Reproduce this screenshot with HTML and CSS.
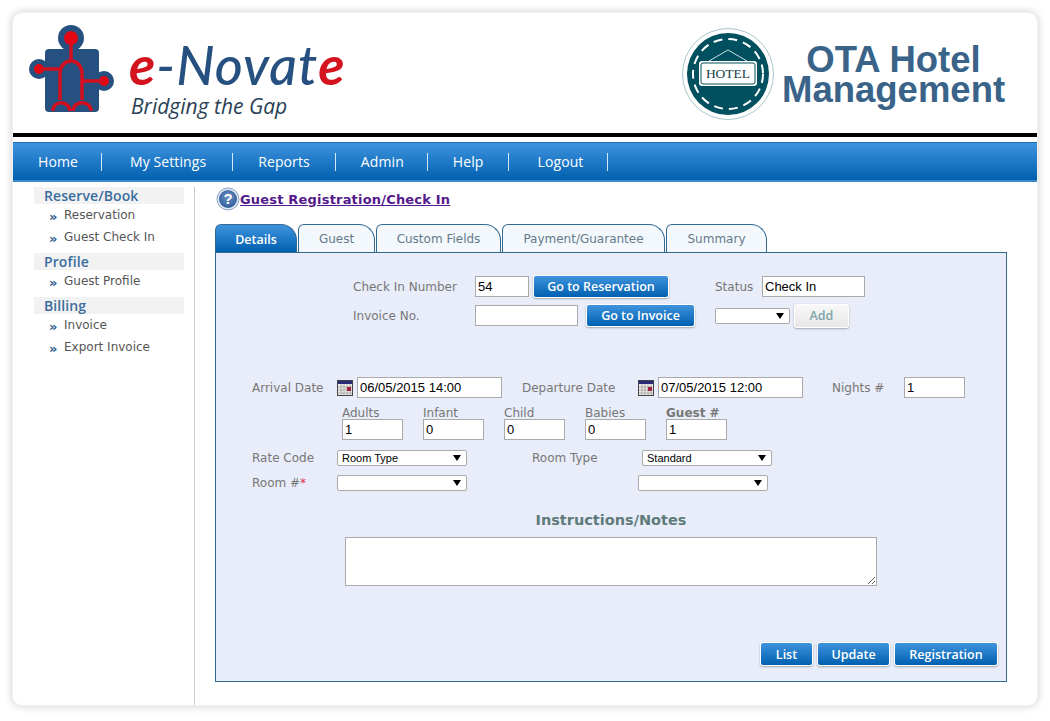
FILE: index.html
```html
<!DOCTYPE html>
<html>
<head>
    <meta charset="UTF-8">
    <title>OTA Hotel Management</title>
    <link rel="stylesheet" href="styles.css">
</head>
<body>
<div class="shell">
    <div class="top">
        <svg class="logo" viewBox="13 13 345 120" width="345" height="120">
            <g fill="#25507f">
                <rect x="45" y="49" width="54" height="63" rx="4"/>
                <circle cx="71" cy="38" r="13"/>
                <circle cx="39" cy="69" r="10"/>
                <circle cx="104" cy="81" r="10"/>
            </g>
            <g fill="#e30613">
                <circle cx="71" cy="38" r="7"/>
                <circle cx="39" cy="69" r="5"/>
                <circle cx="104" cy="81" r="5"/>
            </g>
            <g fill="none" stroke="#d3101f" stroke-width="3.5">
                <path d="M71 44V61"/>
                <path d="M39 69H60M104 81H82"/>
                <path d="M60 100V74C60 66 65 61 71 61C77 61 82 66 82 74V100"/>
                <path d="M53 111C53 100 69 100 70 111M73 111C73 100 91 100 91 111"/>
            </g>
            <text class="logo-name" x="129" y="85"><tspan class="logo-e" fill="#d3141f">e</tspan><tspan fill="#25507f">-Novat</tspan><tspan class="logo-e" fill="#d3141f">e</tspan></text>
            <text class="logo-tag" x="131" y="114">Bridging the Gap</text>
        </svg>
        <div class="brand">
            <svg class="badge" viewBox="0 0 94 94" width="94" height="94">
                <circle cx="47" cy="47" r="45.5" fill="#fff" stroke="#a9c6cc"/>
                <circle cx="47" cy="47" r="41" fill="#00505f"/>
                <circle cx="47" cy="47" r="35" fill="none" stroke="#fff" stroke-width="2" stroke-dasharray="9 6"/>
                <path d="M28 34L47 23L66 34" fill="none" stroke="#cfe0e2"/>
                <rect x="18" y="34" width="58" height="25" rx="3" fill="#fff"/>
                <rect x="20" y="36" width="54" height="21" rx="2" fill="none" stroke="#00505f"/>
                <text class="badge-text" x="47" y="51">HOTEL</text>
            </svg>
            <h1 class="brand-name">OTA Hotel<br>Management</h1>
        </div>
    </div>
    <div class="rule"></div>
    <ul class="menu">
        <li>Home</li>
        <li>My Settings</li>
        <li>Reports</li>
        <li>Admin</li>
        <li>Help</li>
        <li>Logout</li>
    </ul>
    <div class="body">
        <div class="side">
            <h3>Reserve/Book</h3>
            <ul>
                <li><i>»</i>Reservation</li>
                <li><i>»</i>Guest Check In</li>
            </ul>
            <h3>Profile</h3>
            <ul>
                <li><i>»</i>Guest Profile</li>
            </ul>
            <h3>Billing</h3>
            <ul>
                <li><i>»</i>Invoice</li>
                <li><i>»</i>Export Invoice</li>
            </ul>
        </div>
        <div class="main">
            <div class="title">
                <svg class="help" viewBox="0 0 24 24" width="24" height="24">
                    <defs>
                        <radialGradient id="helpfill" cx="50%" cy="40%" r="60%">
                            <stop offset="0" stop-color="#6f93c4"/>
                            <stop offset="1" stop-color="#2f5c9a"/>
                        </radialGradient>
                    </defs>
                    <circle cx="12" cy="12" r="11" fill="#dfe8f3" stroke="#8ba6c8"/>
                    <circle cx="12" cy="12" r="9" fill="url(#helpfill)"/>
                    <text class="help-mark" x="12" y="17">?</text>
                </svg>
                <a href="#">Guest Registration/Check In</a>
            </div>
            <div class="tabs">
                <div class="tab active t1">Details</div>
                <div class="tab t2">Guest</div>
                <div class="tab t3">Custom Fields</div>
                <div class="tab t4">Payment/Guarantee</div>
                <div class="tab t5">Summary</div>
            </div>
            <div class="panel">
                <div class="row r1">
                    <label class="l122">Check In Number</label>
                    <input class="w54" value="54">
                    <button class="btn go1">Go to Reservation</button>
                    <label class="status">Status</label>
                    <input class="w103" value="Check In">
                </div>
                <div class="row r2">
                    <label class="l122">Invoice No.</label>
                    <input class="w103">
                    <button class="btn go2">Go to Invoice</button>
                    <span class="sel w75 s2"><select></select></span>
                    <button class="btn off">Add</button>
                </div>
                <div class="row r3">
                    <label class="l85">Arrival Date</label>
                    <svg class="cal" viewBox="0 0 16 16" width="16" height="16">
                        <rect x=".5" y=".5" width="15" height="15" fill="#f2eee8" stroke="#444"/>
                        <rect x="1" y="1" width="14" height="3" fill="#2a2a7a"/>
                        <path d="M1 7H15M1 10H15M1 13H15M4 4V15M7 4V15M10 4V15M13 4V15" stroke="#aaa" fill="none"/>
                        <rect x="10" y="7" width="4" height="4" fill="#a02040"/>
                    </svg>
                    <input class="w145 d1" value="06/05/2015 14:00">
                    <label class="dep">Departure Date</label>
                    <svg class="cal" viewBox="0 0 16 16" width="16" height="16">
                        <rect x=".5" y=".5" width="15" height="15" fill="#f2eee8" stroke="#444"/>
                        <rect x="1" y="1" width="14" height="3" fill="#2a2a7a"/>
                        <path d="M1 7H15M1 10H15M1 13H15M4 4V15M7 4V15M10 4V15M13 4V15" stroke="#aaa" fill="none"/>
                        <rect x="10" y="7" width="4" height="4" fill="#a02040"/>
                    </svg>
                    <input class="w145 d2" value="07/05/2015 12:00">
                    <label class="nights">Nights #</label>
                    <input class="w61" value="1">
                </div>
                <div class="row r4">
                    <div class="count"><label>Adults</label><input class="w61" value="1"></div>
                    <div class="count"><label>Infant</label><input class="w61" value="0"></div>
                    <div class="count"><label>Child</label><input class="w61" value="0"></div>
                    <div class="count"><label>Babies</label><input class="w61" value="0"></div>
                    <div class="count"><label class="strong">Guest #</label><input class="w61" value="1"></div>
                </div>
                <div class="row r5">
                    <label class="l85">Rate Code</label>
                    <span class="sel w130"><select><option>Room Type</option></select></span>
                    <label class="rt">Room Type</label>
                    <span class="sel w130"><select><option>Standard</option></select></span>
                </div>
                <div class="row r6">
                    <label class="l85">Room #<b>*</b></label>
                    <span class="sel w130"><select></select></span>
                    <span class="sel w130 s6"><select></select></span>
                </div>
                <h4 class="notes-head">Instructions/Notes</h4>
                <textarea class="notes"></textarea>
                <div class="actions">
                    <button class="btn b-list">List</button>
                    <button class="btn b-update">Update</button>
                    <button class="btn b-reg">Registration</button>
                </div>
            </div>
        </div>
    </div>
</div>
</body>
</html>
```

FILE: styles.css
```css
*{
    padding:0;
    margin:0;
    box-sizing:border-box;
}
ul,li{
    list-style:none;
}
body{
    background:#fff;
    padding:12px 12px 15px;
    font-family:"DejaVu Sans",sans-serif;
    font-size:12px;
    color:#777;
}
.shell{
    width:1026px;
    height:694px;
    background:#fff;
    border:1px solid #f0f0f0;
    border-radius:10px;
    box-shadow:0 0 8px rgba(0,0,0,.2);
    display:flex;
    flex-direction:column;
}
.top{
    height:120px;
    display:flex;
    justify-content:space-between;
}
.logo-name{
    font-family:"Lato",sans-serif;
    font-style:italic;
    font-size:54px;
    letter-spacing:1px;
    font-weight:500;
}
.logo-e{
    font-weight:700;
}
.logo-tag{
    font-family:"Open Sans",sans-serif;
    font-style:italic;
    font-size:21px;
    fill:#2a3f55;
}
.brand{
    display:flex;
    align-items:center;
    gap:7px;
    padding:2px 32px 0 0;
}
.badge-text{
    font-family:"Liberation Serif",serif;
    font-size:13.5px;
    text-anchor:middle;
    fill:#123f4a;
}
.brand-name{
    width:223px;
    font-family:"Liberation Sans",sans-serif;
    font-size:36.5px;
    line-height:30px;
    font-weight:bold;
    color:#3a6389;
    text-align:center;
    margin-top:2px;
}
.rule{
    height:4px;
    background:#000;
    margin-bottom:5px;
}
.menu{
    height:40px;
    display:flex;
    align-items:center;
    background:linear-gradient(#3f93dd,#0060b0);
    border-top:1px solid #1f6fb8;
    border-bottom:2px solid #3d8bcb;
    font-family:"Open Sans",sans-serif;
    font-size:14px;
    letter-spacing:.1px;
    color:#fff;
    padding-left:25px;
}
.menu li{
    padding-right:24px;
    margin-right:25px;
    border-right:1px solid #d5e6f5;
    line-height:18px;
}
.menu li:nth-child(1){
    padding-right:23px;
    margin-right:28px;
}
.menu li:nth-child(2){
    padding-right:26px;
}
.menu li:nth-child(3){
    padding-right:25px;
}
.menu li:nth-child(4){
    padding-right:23px;
}
.menu li:nth-child(5){
    margin-right:29px;
}
.body{
    flex:1;
    display:flex;
    padding-top:5px;
}
.side{
    width:182px;
    padding-left:21px;
    border-right:1px solid #ccc;
}
.side h3{
    width:150px;
    height:17px;
    padding-left:10px;
    background:#f2f2f2;
    font-family:"Open Sans",sans-serif;
    font-size:14px;
    letter-spacing:.1px;
    line-height:17px;
    font-weight:600;
    color:#3a6d9e;
}
.side ul{
    margin-bottom:5px;
}
.side li{
    height:22px;
    line-height:21px;
    padding-top:1px;
    color:#555;
    padding-left:15px;
}
.side i{
    display:inline-block;
    width:15px;
    font-style:normal;
    font-weight:bold;
    font-size:13px;
    color:#2a5a8a;
    vertical-align:-2px;
}
.main{
    flex:1;
    padding:0 0 0 20px;
}
.title{
    height:24px;
    display:flex;
    align-items:center;
    margin-left:1px;
}
.help{
    flex:none;
}
.help-mark{
    font-family:"Liberation Sans",sans-serif;
    font-size:15px;
    font-weight:bold;
    fill:#fff;
    text-anchor:middle;
}
.title a{
    font-size:13px;
    letter-spacing:.19px;
    font-weight:bold;
    color:#551a8b;
}
.tabs{
    display:flex;
    gap:1px;
    margin-top:13px;
    height:28px;
}
.tab{
    line-height:29px;
    text-align:center;
    background:#f3f8fd;
    border:1px solid #336a92;
    border-bottom:none;
    border-radius:6px 16px 0 0;
    color:#667a8a;
}
.t1{ width:82px; }
.t2{ width:77px; }
.t3{ width:125px; }
.t4{ width:163px; }
.t5{ width:101px; }
.tab.active{
    background:linear-gradient(#3f93dd,#0060b0);
    color:#fff;
    font-family:"Open Sans",sans-serif;
    font-weight:600;
    font-size:12.5px;
}
.panel{
    width:792px;
    height:430px;
    background:#e8edf9;
    border:1px solid #336a92;
    padding-top:23px;
}
.row{
    display:flex;
    align-items:center;
}
.r1{
    padding-left:137px;
    height:21px;
}
.r2{
    padding-left:137px;
    height:23px;
    margin-top:7px;
}
.r3{
    padding-left:36px;
    height:21px;
    margin-top:50px;
}
.r4{
    padding-left:126px;
    margin-top:6px;
    gap:20px;
}
.r5{
    padding-left:36px;
    height:16px;
    margin-top:10px;
}
.r6{
    padding-left:36px;
    height:16px;
    margin-top:9px;
}
input{
    height:21px;
    border:1px solid #aaa;
    background:#fff;
    font-family:"Liberation Sans",sans-serif;
    font-size:13px;
    color:#000;
    padding:0 2px;
}
.w54{ width:54px; }
.w61{ width:61px; }
.w103{ width:103px; }
.w145{ width:145px; }
.l122{ width:122px; }
.l85{ width:85px; }
.d1{ margin-left:4px; }
.d2{ margin-left:4px; }
.dep{ width:116px; margin-left:20px; }
.nights{ width:72px; margin-left:29px; }
.status{ width:47px; margin-left:46px; }
.rt{ width:110px; margin-left:65px; }
.s2{ margin-left:20px; }
.s6{ margin-left:171px; }
.count label{
    display:block;
    height:15px;
    line-height:18px;
}
.strong{
    font-weight:bold;
}
.r5 label,
.r6 label{
    line-height:20px;
}
.r6 b{
    color:#e0304a;
    font-weight:normal;
}
.sel{
    display:block;
    position:relative;
    height:16px;
}
.w75{ width:75px; }
.w130{ width:130px; }
.sel select{
    appearance:none;
    width:100%;
    height:16px;
    border:1px solid #aaa;
    border-radius:2px;
    background:#fff;
    font-family:"Liberation Sans",sans-serif;
    font-size:11px;
    color:#000;
    padding-left:4px;
}
.sel::after{
    content:"";
    position:absolute;
    right:6px;
    top:5px;
    border-left:4px solid transparent;
    border-right:4px solid transparent;
    border-top:6px solid #000;
}
.btn{
    flex:none;
    height:23px;
    border:1px solid #fff;
    border-radius:3px;
    background:linear-gradient(#3f93dd,#0060b0);
    box-shadow:0 1px 2px rgba(0,0,0,.3);
    font-family:"Open Sans",sans-serif;
    font-weight:600;
    font-size:12.5px;
    color:#fff;
}
.go1{ width:136px; margin-left:4px; }
.go2{ width:109px; margin-left:8px; }
.off{
    width:55px;
    height:24px;
    margin-left:4px;
    background:linear-gradient(#f8f8f8,#e8e8e8);
    color:#7fa3a8;
}
.notes-head{
    font-size:14.5px;
    text-align:center;
    color:#5f7a7a;
    line-height:16px;
    margin-top:21px;
    width:790px;
}
.notes{
    display:block;
    width:532px;
    height:49px;
    margin:9px 0 0 129px;
    border:1px solid #aaa;
    background:#fff;
}
.actions{
    display:flex;
    justify-content:flex-end;
    gap:4px;
    margin-top:56px;
    padding-right:8px;
}
.actions .btn{
    height:24px;
}
.b-list{ width:53px; }
.b-update{ width:73px; }
.b-reg{ width:104px; }
```
